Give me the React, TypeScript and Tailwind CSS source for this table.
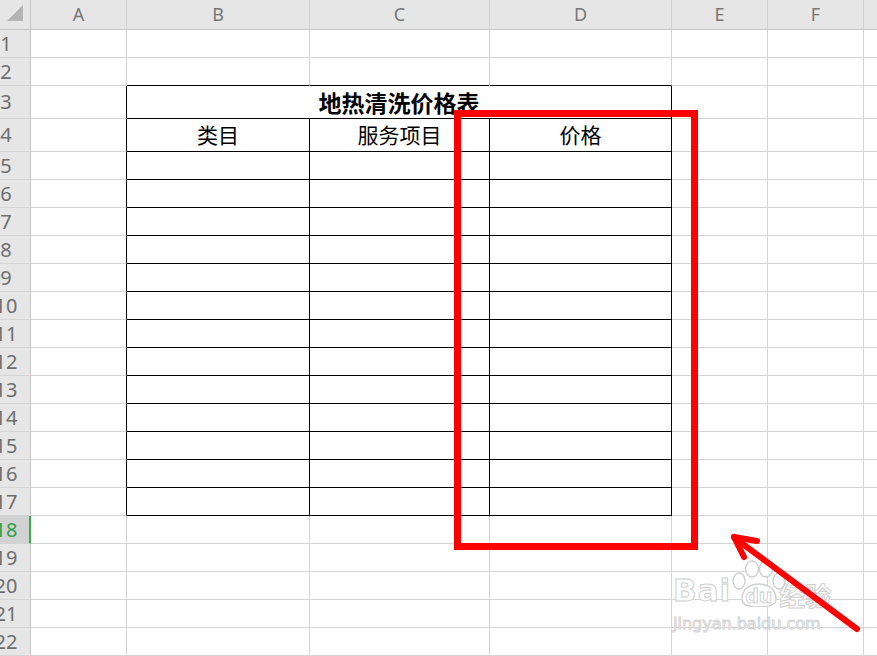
import React from 'react';

const cols = ['A', 'B', 'C', 'D', 'E', 'F', ''];
const rows = Array.from({ length: 22 }, (_, i) => i + 1);

const cjk = "font-['Noto_Sans_CJK_SC',sans-serif]";

function rowHeight(r: number) {
  return r === 3 || r === 4 ? 'h-[33px]' : 'h-[28px]';
}

function cellClass(r: number, c: number) {
  const inTable = r >= 3 && r <= 17;
  const blackRight = inTable && (c === 0 || c === 3 || (r >= 4 && (c === 1 || c === 2)));
  const blackBottom = (r === 2 || inTable) && c >= 1 && c <= 3;
  return [
    'border-b',
    blackBottom ? 'border-b-black' : 'border-b-[#d4d4d4]',
    c === 6 ? '' : 'border-r',
    c === 6 ? '' : blackRight ? 'border-r-black' : 'border-r-[#d4d4d4]',
    'flex items-center justify-center',
  ].join(' ');
}

const header4: Record<number, string> = { 1: '类目', 2: '服务项目', 3: '价格' };

function Paw() {
  return (
    <svg width="54" height="48" viewBox="0 0 54 48" className="absolute left-0 top-0">
      <g fill="white" stroke="#cfcfcf" strokeWidth="1.4">
        <ellipse cx="7" cy="22" rx="6" ry="8" />
        <ellipse cx="20" cy="10" rx="6.5" ry="8" />
        <ellipse cx="34" cy="10" rx="6.5" ry="8" />
        <ellipse cx="47" cy="22" rx="6" ry="8" />
        <path d="M10 40 C10 30 18 25 27 25 C36 25 44 30 44 40 C44 46 38 48 27 48 C16 48 10 46 10 40 Z" />
      </g>
    </svg>
  );
}

export default function App() {
  return (
    <div className="relative w-[877px] h-[656px] overflow-hidden bg-white font-['Noto_Sans',sans-serif]">
      <div className="grid grid-cols-[31px_96px_183px_180px_182px_96px_96px_1fr]">
        {/* column header */}
        <div className="h-[30px] bg-[#e6e6e6] border-r border-b border-[#c6c6c6] relative">
          <svg width="17" height="17" className="absolute left-[7px] top-[5px]">
            <polygon points="16,0 16,16 0,16" fill="#b4b4b4" />
          </svg>
        </div>
        {cols.map((c, i) => (
          <div
            key={c + i}
            className={`h-[30px] bg-[#e6e6e6] border-b border-b-[#c6c6c6] ${i === 6 ? '' : 'border-r border-r-[#d0d0d0]'} flex items-center justify-center text-[18px] text-[#767676]`}
          >
            {c}
          </div>
        ))}

        {rows.map((r) => {
          const active = r === 18;
          const rh = rowHeight(r);
          return (
            <React.Fragment key={r}>
              <div
                className={`${rh} border-b border-b-[#d4d4d4] ${active ? 'bg-[#d2d2d2] border-r-2 border-r-[#3cab4a] text-[#2f9e44]' : 'bg-[#e6e6e6] border-r border-r-[#c6c6c6] text-[#6e6e6e]'} flex items-center`}
              >
                <div className="w-[12px] flex justify-center text-[20px] leading-none">{r}</div>
              </div>
              {r === 3 ? (
                <>
                  <div className={`${rh} ${cellClass(r, 0)}`} />
                  <div className={`${rh} col-span-3 border-b border-r border-b-black border-r-black flex items-center justify-center ${cjk} font-bold text-[23px] text-black`}>
                    地热清洗价格表
                  </div>
                  {[4, 5, 6].map((c) => (
                    <div key={c} className={`${rh} ${cellClass(r, c)}`} />
                  ))}
                </>
              ) : (
                [0, 1, 2, 3, 4, 5, 6].map((c) => (
                  <div key={c} className={`${rh} ${cellClass(r, c)} ${cjk} text-[21px] text-black`}>
                    {r === 4 ? header4[c] : ''}
                  </div>
                ))
              )}
            </React.Fragment>
          );
        })}
      </div>

      {/* red highlight box */}
      <div className="absolute left-[454px] top-[110px] w-[244px] h-[440px] border-[7px] border-[#ff0000] pointer-events-none" />

      {/* watermark */}
      <div className="absolute left-[673px] top-[559px] flex flex-col pointer-events-none select-none">
        <div className="flex items-end h-[48px]">
          <span className="text-[31px] leading-none font-bold text-white [-webkit-text-stroke:1px_#cfcfcf] tracking-[1px] font-['DejaVu_Sans',sans-serif] mb-[1px]">Bai</span>
          <span className="relative w-[54px] h-[48px] ml-[1px]">
            <Paw />
            <span className="absolute left-[13px] bottom-[1px] text-[19px] leading-none font-bold text-white [-webkit-text-stroke:1px_#cfcfcf] font-['DejaVu_Sans',sans-serif]">du</span>
          </span>
          <span className={`text-[26px] leading-none font-bold text-white [-webkit-text-stroke:1px_#cfcfcf] ${cjk} -ml-[7px] mb-[-1px]`}>经验</span>
        </div>
        <div className="text-[16px] leading-none mt-[9px] text-white [-webkit-text-stroke:1px_#d4d4d4] font-['DejaVu_Sans',sans-serif]">
          jingyan.baidu.com
        </div>
      </div>

      {/* arrow */}
      <svg width="877" height="656" className="absolute left-0 top-0 pointer-events-none">
        <g stroke="#ff0000" strokeWidth="6" strokeLinecap="round" fill="none">
          <line x1="857" y1="629" x2="736" y2="539" />
          <line x1="734" y1="537" x2="757" y2="541" />
          <line x1="734" y1="537" x2="744" y2="557" />
        </g>
      </svg>
    </div>
  );
}
